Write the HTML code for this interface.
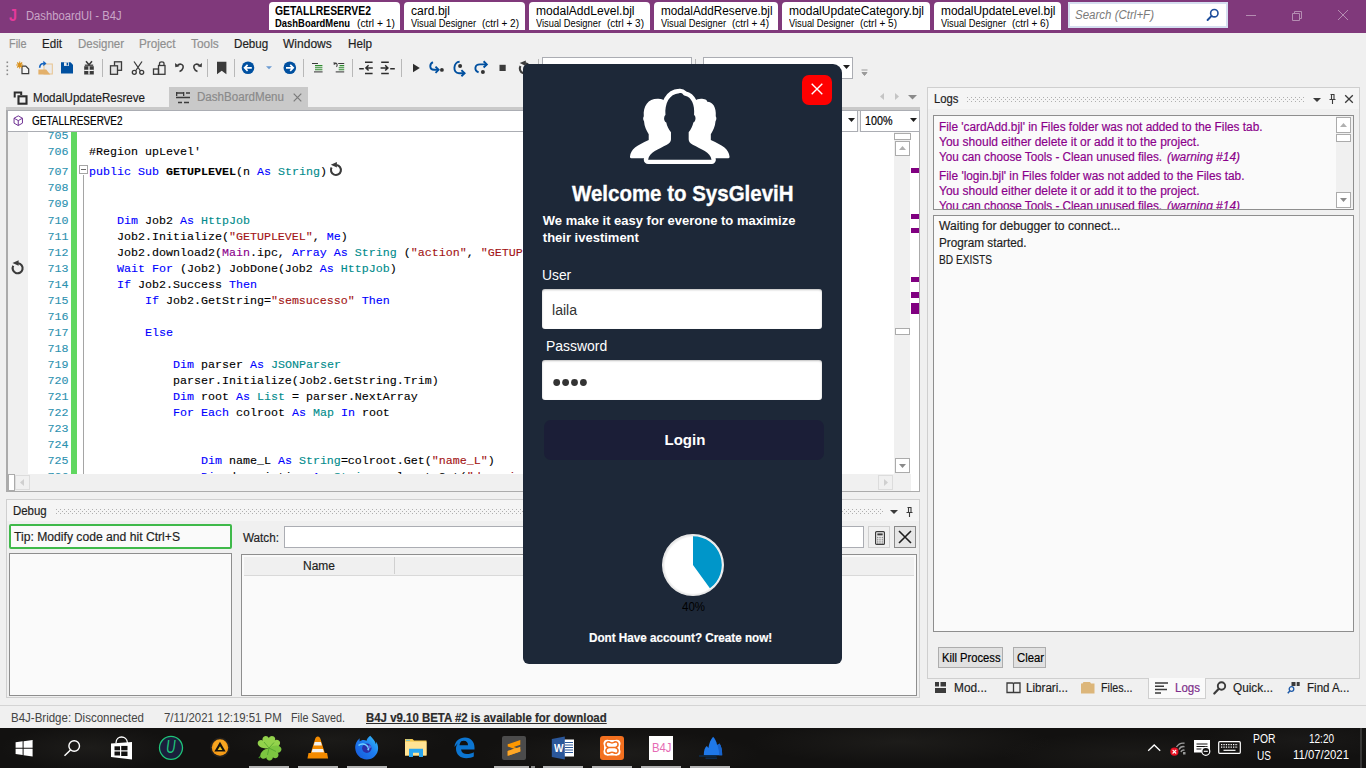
<!DOCTYPE html>
<html lang="en"><head>
<meta charset="utf-8">
<title>DashboardUI - B4J</title>
<style>
*{box-sizing:border-box;margin:0;padding:0}
html,body{width:1366px;height:768px;overflow:hidden;background:#f0f0f0}
body{position:relative;font-family:"Liberation Sans",sans-serif;font-size:12px;color:#1e1e1e}
.a{position:absolute;white-space:nowrap}
.t{position:absolute;white-space:nowrap;line-height:1;transform-origin:0 0}
/* title bar */
#titlebar{left:0;top:0;width:1366px;height:33px;background:#80397b}
.ttab{position:absolute;top:2px;height:28px;background:#fff;border-radius:4px 4px 0 0}
.ttab .l1{position:absolute;left:7px;top:3px;font-size:13px;line-height:13px;color:#000;white-space:nowrap}
.ttab .l2{position:absolute;left:7px;top:16px;font-size:11px;line-height:11px;color:#000;white-space:nowrap}
/* generic */
.box{position:absolute;background:#fff;border:1px solid #abadb3}
.sep{position:absolute;width:1px;background:#b4b4b4}
svg{position:absolute;overflow:visible}
/* code */
#code{left:77px;top:132px;width:818px;height:342px;background:#fff;overflow:hidden}
.cl{position:absolute;left:89px;white-space:pre;font-family:"Liberation Mono",monospace;font-size:11.67px;line-height:16px;height:16px;color:#000}
.ln{position:absolute;left:28px;width:40.5px;text-align:right;font-family:"Liberation Mono",monospace;font-size:11.67px;line-height:16px;height:16px;color:#2b91af}
.cl,.ln{-webkit-text-stroke:.12px currentColor}
.t{-webkit-text-stroke:.18px currentColor}
#modal .t,#titlebar .t,#taskbar .t{-webkit-text-stroke:0}
.k{color:#0000ff}.ty{color:#008b8b}.s{color:#a31515}.m{color:#8b008b}
</style>
</head>
<body>
<!-- TITLE BAR -->
<div id="titlebar" class="a">
<span class="t" style="color: rgb(230, 57, 155); font-weight: bold; font-size: 17px; left: 8.5px; top: 6.61px; transform: scaleX(0.8449);">J</span>
<span class="t" style="color: rgb(201, 166, 199); font-size: 12px; left: 26.4px; top: 9.64px; transform: scaleX(0.9358);">DashboardUI - B4J</span>
<div class="ttab" style="left:269px;width:131px"><span class="t" style="font-weight: bold; color: rgb(0, 0, 0); font-size: 12px; left: 6.4px; top: 2.64px; transform: scaleX(0.8655);">GETALLRESERVE2</span><span class="t" style="font-weight: bold; color: rgb(0, 0, 0); font-size: 10.5px; left: 6.4px; top: 16.31px; transform: scaleX(0.8989);">DashBoardMenu</span><span class="t" style="color: rgb(0, 0, 0); font-size: 10.5px; left: 88px; top: 16.31px; transform: scaleX(0.9795);">(ctrl + 1)</span></div>
<div class="ttab" style="left:404px;width:121px"><span class="t" style="color: rgb(0, 0, 0); font-size: 12px; left: 6.5px; top: 2.64px; transform: scaleX(1.0081);">card.bjl</span><span class="t" style="color: rgb(0, 0, 0); font-size: 10.5px; left: 6.5px; top: 16.31px; transform: scaleX(0.886);">Visual Designer</span><span class="t" style="color: rgb(0, 0, 0); font-size: 10.5px; left: 78px; top: 16.31px; transform: scaleX(0.9537);">(ctrl + 2)</span></div>
<div class="ttab" style="left:529px;width:121px"><span class="t" style="color: rgb(0, 0, 0); font-size: 12px; left: 6.5px; top: 2.64px; transform: scaleX(1.0045);">modalAddLevel.bjl</span><span class="t" style="color: rgb(0, 0, 0); font-size: 10.5px; left: 6.5px; top: 16.31px; transform: scaleX(0.886);">Visual Designer</span><span class="t" style="color: rgb(0, 0, 0); font-size: 10.5px; left: 78px; top: 16.31px; transform: scaleX(0.9537);">(ctrl + 3)</span></div>
<div class="ttab" style="left:654px;width:124px"><span class="t" style="color: rgb(0, 0, 0); font-size: 12px; left: 6.5px; top: 2.64px; transform: scaleX(0.9775);">modalAddReserve.bjl</span><span class="t" style="color: rgb(0, 0, 0); font-size: 10.5px; left: 6.5px; top: 16.31px; transform: scaleX(0.886);">Visual Designer</span><span class="t" style="color: rgb(0, 0, 0); font-size: 10.5px; left: 78px; top: 16.31px; transform: scaleX(0.9537);">(ctrl + 4)</span></div>
<div class="ttab" style="left:782px;width:148px"><span class="t" style="color: rgb(0, 0, 0); font-size: 12px; left: 6.5px; top: 2.64px; transform: scaleX(1.0035);">modalUpdateCategory.bjl</span><span class="t" style="color: rgb(0, 0, 0); font-size: 10.5px; left: 6.5px; top: 16.31px; transform: scaleX(0.886);">Visual Designer</span><span class="t" style="color: rgb(0, 0, 0); font-size: 10.5px; left: 78px; top: 16.31px; transform: scaleX(0.9537);">(ctrl + 5)</span></div>
<div class="ttab" style="left:934px;width:127px"><span class="t" style="color: rgb(0, 0, 0); font-size: 12px; left: 6.5px; top: 2.64px; transform: scaleX(0.9921);">modalUpdateLevel.bjl</span><span class="t" style="color: rgb(0, 0, 0); font-size: 10.5px; left: 6.5px; top: 16.31px; transform: scaleX(0.886);">Visual Designer</span><span class="t" style="color: rgb(0, 0, 0); font-size: 10.5px; left: 78px; top: 16.31px; transform: scaleX(0.9537);">(ctrl + 6)</span></div>
<div class="a" style="left:1068px;top:2px;width:160px;height:26px;background:#fff;border:2px solid #d5def0"></div>
<span class="t" style="font-style: italic; color: rgb(122, 122, 122); font-size: 12px; left: 1075px; top: 9.34px; transform: scaleX(0.9592);">Search (Ctrl+F)</span>
<svg style="left:1206px;top:8px" width="14" height="14" viewBox="0 0 14 14"><circle cx="8.3" cy="5.2" r="3.7" fill="none" stroke="#1e4e9c" stroke-width="1.6"></circle><path d="M5.6 7.9 L1.6 12" stroke="#1e4e9c" stroke-width="2" stroke-linecap="round"></path></svg>
<svg style="left:1245px;top:8px" width="110" height="16" viewBox="0 0 110 16"><path d="M1 7.5h10" stroke="#b58db2" stroke-width="1"></path><path d="M47.5 5.5h7v7h-7z M49.5 5.5v-2h7v7h-2" fill="none" stroke="#b58db2" stroke-width="1"></path><path d="M93 2l10 10M103 2l-10 10" stroke="#b58db2" stroke-width="1"></path></svg>
</div>
<!-- MENU -->
<div id="menubar">
<span class="t" style="color: rgb(143, 143, 143); font-size: 12px; left: 9.3px; top: 37.64px; transform: scaleX(0.9047);">File</span>
<span class="t" style="font-size: 12px; left: 42.2px; top: 37.64px; transform: scaleX(0.9668);">Edit</span>
<span class="t" style="color: rgb(143, 143, 143); font-size: 12px; left: 77.5px; top: 37.64px; transform: scaleX(0.9577);">Designer</span>
<span class="t" style="color: rgb(143, 143, 143); font-size: 12px; left: 138.5px; top: 37.64px; transform: scaleX(0.977);">Project</span>
<span class="t" style="color: rgb(143, 143, 143); font-size: 12px; left: 190.5px; top: 37.64px; transform: scaleX(0.9887);">Tools</span>
<span class="t" style="font-size: 12px; left: 233.6px; top: 37.64px; transform: scaleX(0.9668);">Debug</span>
<span class="t" style="font-size: 12px; left: 283.4px; top: 37.64px; transform: scaleX(1.0023);">Windows</span>
<span class="t" style="font-size: 12px; left: 347.5px; top: 37.64px; transform: scaleX(0.9762);">Help</span>
</div>
<!-- TOOLBAR -->
<div id="toolbar">
<svg style="left:0;top:55px" width="880" height="28" viewBox="0 55 880 28">
<!-- grip -->
<g fill="#8a8a8a"><rect x="6.5" y="61.5" width="1.6" height="1.6"></rect><rect x="6.5" y="65.5" width="1.6" height="1.6"></rect><rect x="6.5" y="69.5" width="1.6" height="1.6"></rect><rect x="6.5" y="73.5" width="1.6" height="1.6"></rect></g>
<!-- new -->
<path d="M22 66.200h3.800l2.900 2.900v4.600h-6.700z" fill="#f4f4f4" stroke="#3b3b3b" stroke-width="1.200"></path><g stroke="#d8901c" stroke-width="1.100"><path d="M19.700 61.500v7M16.200 65h7M17.200 62.500l5 5M22.200 62.500l-5 5"></path></g>
<!-- open -->
<rect x="44" y="64" width="8.300" height="10" fill="#ebebeb" stroke="#e8c48f" stroke-width="1"></rect><path d="M38.400 74.500v-5h7.800l4 5z" fill="#e3b06a"></path><path d="M39.700 67.800c0-3.200 1.800-4.300 4.300-4.300" fill="none" stroke="#1565c0" stroke-width="1.700"></path><path d="M43.300 60.800l3.200 2.700-3.200 2.700z" fill="#1565c0"></path>
<!-- save -->
<path d="M61 62.3h9.5l2.5 2.5v8.8h-12z" fill="#0050a0"></path><rect x="64" y="62.3" width="5" height="3.6" fill="#f0f0f0"></rect><rect x="66.6" y="62.8" width="1.6" height="2.6" fill="#0050a0"></rect>
<!-- zip/gift -->
<rect x="84.200" y="66.200" width="9.600" height="8.300" fill="#3b3b3b"></rect><path d="M89 66.200v8.300M84.200 70.300h9.600" stroke="#f0f0f0" stroke-width="1.300"></path><path d="M86 61.300l3 3.400 3-3.400" fill="none" stroke="#3b3b3b" stroke-width="1.600"></path><path d="M84.800 65.200h8.400" stroke="#3b3b3b" stroke-width="1.300"></path>
<rect x="102" y="59" width="1" height="18" fill="#b8b8b8"></rect>
<!-- copy -->
<g fill="#e4e4e4" stroke="#3b3b3b" stroke-width="1.3"><rect x="114.5" y="61.8" width="7" height="8.5"></rect><rect x="110.5" y="65.8" width="7" height="8.5"></rect></g>
<!-- cut -->
<g fill="none" stroke="#3b3b3b" stroke-width="1.3"><path d="M134 61.5l6.5 9.5M142 61.5l-6.5 9.5"></path><circle cx="134.3" cy="72.3" r="2"></circle><circle cx="141.7" cy="72.3" r="2"></circle></g>
<!-- paste -->
<g fill="none" stroke="#3b3b3b" stroke-width="1.3"><rect x="158.5" y="65.5" width="6.5" height="8.8"></rect><rect x="153.5" y="69" width="5" height="5.3"></rect><path d="M159.5 65.5v-2c0-2.3 4.5-2.3 4.5 0v2"></path></g>
<!-- undo -->
<path d="M177 66c3-3.5 7-1.5 6 2-.5 1.800-2 3-3.500 3.500" fill="none" stroke="#3b3b3b" stroke-width="1.5"></path><path d="M175 63l.3 4.300 4-1z" fill="#3b3b3b"></path>
<!-- redo -->
<path d="M200 66c-3-3.500-7-1.500-6 2 .5 1.800 2 3 3.500 3.500" fill="none" stroke="#3b3b3b" stroke-width="1.5"></path><path d="M202 63l-.3 4.300-4-1z" fill="#3b3b3b"></path>
<rect x="207" y="59" width="1" height="18" fill="#b8b8b8"></rect>
<!-- bookmark -->
<path d="M217 61.700h9.400v12.600l-4.700-3.600-4.700 3.600z" fill="#3b3b3b"></path>
<rect x="234" y="59" width="1" height="18" fill="#b8b8b8"></rect>
<!-- back/forward -->
<circle cx="248" cy="67.800" r="6.300" fill="#0050a0"></circle><path d="M251.800 67.800h-7M247.600 64.800l-3 3 3 3" fill="none" stroke="#fff" stroke-width="1.700"></path>
<path d="M266 66.300h6l-3 3z" fill="#6c9bd2"></path>
<circle cx="289.800" cy="67.800" r="6.300" fill="#0050a0"></circle><path d="M286 67.800h7M290.200 64.800l3 3-3 3" fill="none" stroke="#fff" stroke-width="1.700"></path>
<rect x="303" y="59" width="1" height="18" fill="#b8b8b8"></rect>
<!-- comment/uncomment -->
<g stroke-width="1.050"><path d="M312 63.500h6" stroke="#3b3b3b"></path><path d="M315 65.600h7.400M315 67.700h7.400M315 69.800h7.400" stroke="#2e8b2e"></path><path d="M314 71.900h8.600" stroke="#3b3b3b"></path></g><g stroke-width="1.050"><path d="M338.200 63.500h6" stroke="#3b3b3b"></path><path d="M339.500 65.600h4.700M338.700 67.700h5.500M338.700 69.800h5.500" stroke="#2e8b2e"></path><path d="M335.700 71.900h8.500" stroke="#3b3b3b"></path><path d="M334.300 63.300c2.600-.6 3.700 1.300 2.200 3.600" stroke="#3b3b3b" fill="none" stroke-width="1.100"></path><path d="M333.500 62l.3 2.900 2.500-1.200z" fill="#3b3b3b" stroke="none"></path></g>
<rect x="352" y="59" width="1" height="18" fill="#b8b8b8"></rect>
<!-- outdent / indent -->
<g stroke="#2d2d2d" stroke-width="1.500" fill="none"><path d="M365 62.200h7.600M365 73.500h7.600M359.200 68.800h4.600M365.800 67.900h7M368.600 65.300l-2.700 2.600 2.700 2.600"></path></g><g stroke="#2d2d2d" stroke-width="1.500" fill="none"><path d="M381.200 62.200h7.600M381.200 73.500h7.600M390.200 68.800h4.600M380.600 67.900h7M385.200 65.300l2.700 2.600-2.700 2.600"></path></g>
<rect x="401" y="59" width="1" height="18" fill="#b8b8b8"></rect>
<!-- run -->
<path d="M413 63.800l6.800 4.200-6.800 4.200z" fill="#2d2d2d"></path>
<!-- step in -->
<g fill="none" stroke="#0050a0" stroke-width="1.900"><path d="M432.900 62.200C429.200 64.300 429.300 69.800 434 69.800H438"></path><path d="M435.500 66.700l3.100 3.100-3.100 3.100"></path></g><circle cx="441.900" cy="69.900" r="1.900" fill="#333"></circle>
<!-- step over -->
<g fill="none" stroke="#0050a0" stroke-width="1.900"><path d="M459.600 61.800C453.300 62 452.300 73.200 459 73.200H464"></path><path d="M461.400 70.100l3.200 3.100-3.200 3.100"></path></g><circle cx="460.100" cy="66.100" r="2" fill="#333"></circle>
<!-- step out -->
<g fill="none" stroke="#0050a0" stroke-width="1.900"><path d="M478.600 72.400C473.800 70.200 474.500 64.400 480 64.400H486"></path><path d="M483.600 61.300l3.200 3.100-3.200 3.100"></path></g><circle cx="482.900" cy="71.900" r="2" fill="#333"></circle>
<!-- stop -->
<rect x="499.500" y="64.800" width="6.200" height="6.200" fill="#3b3b3b"></rect>
<!-- restart -->
<g transform="translate(524.8 68.4)"><path d="M-4.330-2.500A5 5 0 1 0 .5-5" fill="none" stroke="#3b3b3b" stroke-width="2.100"></path><path d="M-5.100-5.300L1-8v5.500z" fill="#3b3b3b"></path></g>
<rect x="538" y="59" width="1" height="18" fill="#b8b8b8"></rect>
<rect x="695" y="59" width="1" height="18" fill="#b8b8b8"></rect>
<!-- overflow -->
<path d="M861.500 70h6M862 72.500h5l-2.500 3z" stroke="#9a9a9a" fill="#9a9a9a" stroke-width="1"></path>
</svg>
<div class="box" style="left:542px;top:57px;width:150px;height:22px"></div>
<div class="box" style="left:703px;top:57px;width:150px;height:22px"></div>
<svg style="left:843px;top:65px" width="8" height="5" viewBox="0 0 8 5"><path d="M0 0h7l-3.500 4z" fill="#1e1e1e"></path></svg>
</div>
<!-- DOC TABS -->
<div id="doctabs">
<div class="a" style="left:169px;top:87px;width:139px;height:21px;background:#c9c9c9"></div>
<div class="a" style="left:6px;top:107px;width:914px;height:4px;background:#c9c9c9"></div>
<svg style="left:13px;top:91px" width="16" height="14" viewBox="0 0 16 14"><path d="M1.700 6.500v-5h6.500v2.500" fill="none" stroke="#2d2d2d" stroke-width="2"></path><rect x="5.500" y="5.300" width="8" height="7.400" fill="none" stroke="#2d2d2d" stroke-width="2.100"></rect></svg>
<span class="t" style="font-size: 12px; left: 33px; top: 91.54px; transform: scaleX(0.965);">ModalUpdateResreve</span>
<svg style="left:175px;top:91px" width="16" height="14" viewBox="0 0 16 14"><g stroke="#3b3b3b" stroke-width="1.500" fill="none"><path d="M1 2h8M11 2h4M1 6.500h14M3 11.500h4M9 11.500h5"></path></g><g fill="#3b3b3b"><rect x="1" y="1" width="1.300" height="4"></rect><rect x="8" y="1" width="1.300" height="4"></rect></g></svg>
<span class="t" style="color: rgb(138, 138, 138); font-size: 12px; left: 196.6px; top: 91.14px; transform: scaleX(0.966);">DashBoardMenu</span>
<svg style="left:293px;top:93px" width="9" height="9" viewBox="0 0 9 9"><path d="M.7.700l7.600 7.600M8.300.700L.7 8.300" stroke="#7a7a7a" stroke-width="1.200"></path></svg>
<svg style="left:878px;top:92px" width="42" height="10" viewBox="0 0 42 10"><path d="M6 1v7l-4-3.500z" fill="#c4c4c4"></path><path d="M17 1v7l4-3.500z" fill="#c4c4c4"></path><path d="M30 3h9l-4.500 4.500z" fill="#8a8a8a"></path></svg>
</div>
<!-- EDITOR -->
<div id="editor">
<div class="a" style="left:6px;top:110px;width:914px;height:382px;background:#ababab"></div>
<div class="box" style="left:7px;top:110px;width:851px;height:22px"></div>
<div class="a" style="left:858px;top:111px;width:2px;height:21px;background:#f0f0f0"></div>
<div class="box" style="left:860px;top:110px;width:60px;height:22px"></div>
<svg style="left:13.300px;top:115px" width="10.500" height="11.400" viewBox="0 0 12 13"><g fill="none" stroke="#6a2c91" stroke-width="1.100"><path d="M6 1l4.800 2.700v5.600L6 12 1.200 9.300V3.700z"></path><path d="M1.200 3.700L6 6.400l4.800-2.700M6 6.400V12"></path></g></svg>
<span class="t" style="color: rgb(0, 0, 0); font-size: 12px; left: 32.2px; top: 115.34px; transform: scaleX(0.8308);">GETALLRESERVE2</span>
<svg style="left:848px;top:118px" width="8" height="5" viewBox="0 0 8 5"><path d="M0 0h7l-3.500 4z" fill="#1e1e1e"></path></svg>
<span class="t" style="color: rgb(0, 0, 0); font-size: 12px; left: 865px; top: 115.34px; transform: scaleX(0.8957);">100%</span>
<svg style="left:910px;top:118px" width="8" height="5" viewBox="0 0 8 5"><path d="M0 0h7l-3.500 4z" fill="#1e1e1e"></path></svg>
<div id="codearea" class="a" style="left:8px;top:132px;width:911px;height:342px;background:#fff;overflow:hidden">
<div class="a" style="left:0;top:0;width:20px;height:342px;background:#f0f0f0"></div>
<div class="a" style="left:63px;top:0;width:6px;height:342px;background:#60d760"></div>
<div class="a" style="left:75px;top:43px;width:1px;height:299px;background:#a5a5a5"></div>
<div class="a" style="left:71px;top:33px;width:9px;height:9px;background:#fff;border:1px solid #a5a5a5"></div>
<div class="a" style="left:73px;top:37px;width:5px;height:1px;background:#6a6a6a"></div>
<div id="codelines" class="a" style="left:-8px;top:0;width:902px;height:342px">
<span class="ln" style="top:-3.7px">705</span>
<span class="ln" style="top:12.3px">706</span>
<span class="cl" style="top:12.3px">#Region upLevel'</span>
<span class="ln" style="top:31.6px">707</span>
<span class="cl" style="top:31.6px"><span class="k">public</span> <span class="k">Sub</span> <b>GETUPLEVEL</b>(n <span class="k">As</span> <span class="ty">String</span>)</span>
<span class="ln" style="top:48.4px">708</span>
<span class="ln" style="top:64.4px">709</span>
<span class="ln" style="top:80.5px">710</span>
<span class="cl" style="top:80.5px">    <span class="k">Dim</span> Job2 <span class="k">As</span> <span class="ty">HttpJob</span></span>
<span class="ln" style="top:96.5px">711</span>
<span class="cl" style="top:96.5px">    Job2.Initialize(<span class="s">"GETUPLEVEL"</span>, <span class="k">Me</span>)</span>
<span class="ln" style="top:112.5px">712</span>
<span class="cl" style="top:112.5px">    Job2.download2(<span class="m">Main</span>.ipc, <span class="k">Array</span> <span class="k">As</span> <span class="ty">String</span> (<span class="s">"action"</span>, <span class="s">"GETUPLEVEL"</span>, <span class="s">"n"</span>, n))</span>
<span class="ln" style="top:128.5px">713</span>
<span class="cl" style="top:128.5px">    <span class="k">Wait For</span> (Job2) JobDone(Job2 <span class="k">As</span> <span class="ty">HttpJob</span>)</span>
<span class="ln" style="top:144.6px">714</span>
<span class="cl" style="top:144.6px">    <span class="k">If</span> Job2.Success <span class="k">Then</span></span>
<span class="ln" style="top:160.6px">715</span>
<span class="cl" style="top:160.6px">        <span class="k">If</span> Job2.GetString=<span class="s">"semsucesso"</span> <span class="k">Then</span></span>
<span class="ln" style="top:176.6px">716</span>
<span class="ln" style="top:192.7px">717</span>
<span class="cl" style="top:192.7px">        <span class="k">Else</span></span>
<span class="ln" style="top:208.7px">718</span>
<span class="ln" style="top:224.7px">719</span>
<span class="cl" style="top:224.7px">            <span class="k">Dim</span> parser <span class="k">As</span> <span class="ty">JSONParser</span></span>
<span class="ln" style="top:240.8px">720</span>
<span class="cl" style="top:240.8px">            parser.Initialize(Job2.GetString.Trim)</span>
<span class="ln" style="top:256.8px">721</span>
<span class="cl" style="top:256.8px">            <span class="k">Dim</span> root <span class="k">As</span> <span class="ty">List</span> = parser.NextArray</span>
<span class="ln" style="top:272.8px">722</span>
<span class="cl" style="top:272.8px">            <span class="k">For Each</span> colroot <span class="k">As</span> <span class="ty">Map</span> <span class="k">In</span> root</span>
<span class="ln" style="top:288.9px">723</span>
<span class="ln" style="top:304.9px">724</span>
<span class="ln" style="top:320.9px">725</span>
<span class="cl" style="top:320.9px">                <span class="k">Dim</span> name_L <span class="k">As</span> <span class="ty">String</span>=colroot.Get(<span class="s">"name_L"</span>)</span>
<span class="ln" style="top:336.9px">726</span>
<span class="cl" style="top:336.9px">                <span class="k">Dim</span> description <span class="k">As</span> <span class="ty">String</span>=colroot.Get(<span class="s">"description"</span>)</span>
</div>
<!-- v scrollbar -->
<div class="a" style="left:886px;top:0;width:16px;height:342px;background:#f0f0f0"></div>
<div class="a" style="left:886px;top:1px;width:17px;height:7px;background:#fff;border:1px solid #ababab"></div>
<div class="a" style="left:887px;top:9px;width:15px;height:15px;background:#fff;border:1px solid #ababab"></div>
<svg style="left:891px;top:14px" width="7" height="4" viewBox="0 0 7 4"><path d="M0 4h7l-3.500-4z" fill="#b0b0b0"></path></svg>
<div class="a" style="left:887px;top:196px;width:15px;height:7px;background:#fff;border:1px solid #ababab"></div>
<div class="a" style="left:887px;top:326px;width:15px;height:15px;background:#fff;border:1px solid #ababab"></div>
<svg style="left:891px;top:332px" width="7" height="4" viewBox="0 0 7 4"><path d="M0 0h7l-3.500 4z" fill="#8a8a8a"></path></svg>
<!-- markers -->
<div class="a" style="left:903px;top:36px;width:8px;height:5px;background:#800080"></div>
<div class="a" style="left:903px;top:82px;width:8px;height:5px;background:#800080"></div>
<div class="a" style="left:903px;top:96px;width:8px;height:5px;background:#800080"></div>
<div class="a" style="left:903px;top:145px;width:8px;height:5px;background:#800080"></div>
<div class="a" style="left:903px;top:160px;width:8px;height:6px;background:#800080"></div>
<div class="a" style="left:903px;top:171px;width:8px;height:11px;background:#800080"></div>
</div>
<!-- h scrollbar -->
<div class="a" style="left:8px;top:474px;width:911px;height:17px;background:#f0f0f0"></div>
<div class="a" style="left:911px;top:474px;width:8px;height:17px;background:#fff"></div>
<div class="a" style="left:8px;top:474px;width:7px;height:17px;background:#fff;border:1px solid #ababab"></div>
<div class="a" style="left:15px;top:475px;width:15px;height:15px;border:1px solid #dcdcdc"></div>
<svg style="left:20px;top:479px" width="4" height="7" viewBox="0 0 4 7"><path d="M4 0v7L0 3.500z" fill="#cfcfcf"></path></svg>
<div class="a" style="left:878px;top:475px;width:15px;height:15px;border:1px solid #dcdcdc"></div>
<svg style="left:884px;top:479px" width="4" height="7" viewBox="0 0 4 7"><path d="M0 0v7l4-3.500z" fill="#cfcfcf"></path></svg>
<!-- reload icons -->
<svg style="left:0;top:0" width="400" height="300" viewBox="0 0 400 300"><g transform="translate(335.9 170)"><path d="M-4.330-2.500A5 5 0 1 0 .5-5" fill="none" stroke="#3b3b3b" stroke-width="2.100"></path><path d="M-5.100-5.300L1-8v5.500z" fill="#3b3b3b"></path></g><g transform="translate(17.6 268.3)"><path d="M-4.330-2.500A5 5 0 1 0 .5-5" fill="none" stroke="#3b3b3b" stroke-width="2.100"></path><path d="M-5.100-5.300L1-8v5.500z" fill="#3b3b3b"></path></g></svg>
</div>
<!-- DEBUG PANEL -->
<svg width="0" height="0" style="position:absolute"><defs><pattern id="dp" width="4" height="4" patternUnits="userSpaceOnUse"><rect x="0" y="0" width="1" height="1" fill="#b0b0b0"></rect><rect x="2" y="2" width="1" height="1" fill="#b0b0b0"></rect></pattern></defs></svg><div id="debug">
<div class="a" style="left:6px;top:499px;width:914px;height:199px;background:#f5f5f5;border:1px solid #cfcfcf"></div>
<div class="a" style="left:7px;top:521px;width:912px;height:176px;background:#f0f0f0"></div>
<span class="t" style="font-size: 12px; left: 12.7px; top: 504.84px; transform: scaleX(0.9527);">Debug</span>
<svg style="left:56px;top:509px" width="828" height="5"><rect width="828" height="5" fill="url(#dp)"></rect></svg>
<svg style="left:889px;top:506px" width="26" height="12" viewBox="0 0 26 12"><path d="M1 4h8l-4 4z" fill="#3b3b3b"></path><path d="M18.500 1.500h4M19.500 1.500v5M22 1.500v5M17.500 6.500h6M20.500 6.500v4.500" stroke="#3b3b3b" stroke-width="1.100" fill="none"></path></svg>
<div class="a" style="left:9px;top:524px;width:223px;height:25px;background:#fafafa;border:2px solid #3fb94a;border-radius:2px"></div>
<span class="t" style="color: rgb(30, 30, 30); font-size: 12px; left: 14.4px; top: 531.14px; transform: scaleX(1.0124);">Tip: Modify code and hit Ctrl+S</span>
<div class="a" style="left:9px;top:553px;width:223px;height:143px;background:#fafafa;border:1px solid #8e8e8e"></div>
<span class="t" style="font-size: 12px; left: 243.3px; top: 531.64px; transform: scaleX(0.9754);">Watch:</span>
<div class="box" style="left:284px;top:526px;width:580px;height:22px"></div>
<div class="a" style="left:868px;top:526px;width:22px;height:22px;background:#f0f0f0;border:1px solid #d0d0d0"></div>
<svg style="left:874.500px;top:530.500px" width="10" height="14" viewBox="0 0 10 14"><rect x=".6" y=".6" width="8.800" height="12.800" rx="1" fill="#f6f6f6" stroke="#3b3b3b" stroke-width="1.200"></rect><rect x="2.300" y="2.400" width="5.400" height="2" fill="#3b3b3b"></rect><g fill="#3b3b3b"><rect x="2.3" y="5.8" width="1" height="1"></rect><rect x="4.5" y="5.8" width="1" height="1"></rect><rect x="6.7" y="5.8" width="1" height="1"></rect><rect x="2.3" y="7.7" width="1" height="1"></rect><rect x="4.5" y="7.7" width="1" height="1"></rect><rect x="6.7" y="7.7" width="1" height="1"></rect><rect x="2.3" y="9.6" width="1" height="1"></rect><rect x="4.5" y="9.6" width="1" height="1"></rect><rect x="6.7" y="9.6" width="1" height="1"></rect><rect x="2.3" y="11.5" width="1" height="1"></rect><rect x="4.5" y="11.5" width="1" height="1"></rect><rect x="6.7" y="11.5" width="1" height="1"></rect></g></svg>
<div class="a" style="left:894px;top:526px;width:22px;height:22px;background:#e6e6e6;border:1px solid #8a8a8a"></div>
<svg style="left:898px;top:530px" width="14" height="14" viewBox="0 0 14 14"><path d="M1 1l12 12M13 1L1 13" stroke="#1e1e1e" stroke-width="1.600"></path></svg>
<div class="a" style="left:241px;top:554px;width:676px;height:142px;background:#fafafa;border:1px solid #8e8e8e"></div>
<div class="a" style="left:244px;top:557px;width:670px;height:19px;background:#f0f0f0;border-bottom:1px solid #d9d9d9"></div>
<div class="a" style="left:394px;top:557px;width:1px;height:17px;background:#d0d0d0"></div>
<span class="t" style="font-size: 12px; left: 303px; top: 560.24px; transform: scaleX(0.9995);">Name</span>
</div>
<!-- LOGS PANEL -->
<div id="logs">
<div class="a" style="left:927px;top:87px;width:433px;height:592px;background:#f5f5f5;border:1px solid #cfcfcf;border-bottom:none"></div>
<div class="a" style="left:928px;top:109px;width:431px;height:569px;background:#f0f0f0"></div>
<span class="t" style="font-size: 12px; left: 933.6px; top: 92.64px; transform: scaleX(0.9412);">Logs</span>
<svg style="left:967px;top:97px" width="338" height="5"><rect width="338" height="5" fill="url(#dp)"></rect></svg>
<svg style="left:1312px;top:93px" width="44" height="12" viewBox="0 0 44 12"><path d="M1 5h8l-4 4z" fill="#3b3b3b"></path><path d="M18.500 1.500h4M19.500 1.500v5M22 1.500v5M17.500 6.500h6M20.500 6.500v4.500" stroke="#3b3b3b" stroke-width="1.100" fill="none"></path><path d="M33.200 2.200l7.600 7.600M40.800 2.200l-7.600 7.600" stroke="#3b3b3b" stroke-width="1.300"></path></svg>
<div class="a" style="left:933px;top:115px;width:421px;height:95px;background:#fafafa;border:1px solid #8e8e8e;overflow:hidden"></div>
<div class="a" style="left:934px;top:116px;width:402px;height:93px;overflow:hidden">
<span class="t" style="color: rgb(139, 0, 139); font-size: 12px; left: 5.3px; top: 5.04px; transform: scaleX(0.984);">File 'cardAdd.bjl' in Files folder was not added to the Files tab.</span>
<span class="t" style="color: rgb(139, 0, 139); font-size: 12px; left: 5.3px; top: 19.84px; transform: scaleX(1.0004);">You should either delete it or add it to the project.</span>
<span class="t" style="color: rgb(139, 0, 139); font-size: 12px; left: 5.3px; top: 34.64px; transform: scaleX(0.9745);">You can choose Tools - Clean unused files.</span>
<span class="t" style="color: rgb(139, 0, 139); font-style: italic; font-size: 12px; left: 232.5px; top: 34.64px; transform: scaleX(0.9949);">(warning #14)</span>
<span class="t" style="color: rgb(139, 0, 139); font-size: 12px; left: 5.3px; top: 53.84px; transform: scaleX(0.9873);">File 'login.bjl' in Files folder was not added to the Files tab.</span>
<span class="t" style="color: rgb(139, 0, 139); font-size: 12px; left: 5.3px; top: 68.64px; transform: scaleX(1.0004);">You should either delete it or add it to the project.</span>
<span class="t" style="color: rgb(139, 0, 139); font-size: 12px; left: 5.3px; top: 84.24px; transform: scaleX(0.9745);">You can choose Tools - Clean unused files.</span>
<span class="t" style="color: rgb(139, 0, 139); font-style: italic; font-size: 12px; left: 232.5px; top: 84.24px; transform: scaleX(0.9949);">(warning #14)</span>
</div>
<div class="a" style="left:1336px;top:116px;width:17px;height:92px;background:#f0f0f0"></div>
<div class="a" style="left:1336px;top:117px;width:15px;height:16px;background:#fff;border:1px solid #ababab"></div>
<svg style="left:1340px;top:123px" width="7" height="4" viewBox="0 0 7 4"><path d="M0 4h7l-3.500-4z" fill="#b0b0b0"></path></svg>
<div class="a" style="left:1336px;top:134px;width:15px;height:8px;background:#fff;border:1px solid #ababab"></div>
<div class="a" style="left:1336px;top:192px;width:15px;height:16px;background:#fff;border:1px solid #ababab"></div>
<svg style="left:1340px;top:198px" width="7" height="4" viewBox="0 0 7 4"><path d="M0 0h7l-3.500 4z" fill="#8a8a8a"></path></svg>
<div class="a" style="left:933px;top:215px;width:421px;height:417px;background:#fafafa;border:1px solid #8e8e8e"></div>
<span class="t" style="font-size: 12px; left: 938.6px; top: 220.14px; transform: scaleX(1.0102);">Waiting for debugger to connect...</span>
<span class="t" style="font-size: 12px; left: 938.6px; top: 237.04px; transform: scaleX(0.979);">Program started.</span>
<span class="t" style="font-size: 12px; left: 938.6px; top: 253.94px; transform: scaleX(0.8455);">BD EXISTS</span>
<div class="a" style="left:938px;top:647px;width:65px;height:21px;background:#e1e1e1;border:1px solid #adadad"></div>
<span class="t" style="color: rgb(0, 0, 0); font-size: 12px; left: 941.5px; top: 651.84px; transform: scaleX(0.9332);">Kill Process</span>
<div class="a" style="left:1013px;top:647px;width:33px;height:21px;background:#e1e1e1;border:1px solid #adadad"></div>
<span class="t" style="color: rgb(0, 0, 0); font-size: 12px; left: 1016.5px; top: 651.84px; transform: scaleX(0.9412);">Clear</span>
<!-- bottom tabs -->
<div class="a" style="left:927px;top:678px;width:433px;height:1px;background:#cfcfcf"></div>
<div class="a" style="left:1148px;top:678px;width:58px;height:21px;background:#fafafa;border:1px solid #cfcfcf;border-top:none"></div>
<svg style="left:935px;top:682px" width="12" height="12" viewBox="0 0 12 12"><g fill="#3b3b3b"><rect x="0" y="0" width="4" height="4.500"></rect><rect x="5.500" y="0" width="5.500" height="4.500"></rect><rect x="0" y="6" width="11" height="5"></rect></g></svg>
<span class="t" style="font-size: 12px; left: 954.4px; top: 682.14px; transform: scaleX(0.9892);">Mod...</span>
<svg style="left:1006px;top:682px" width="15" height="12" viewBox="0 0 15 12"><path d="M7.500 1.500v9M1 1h5.500q1 0 1 1 0-1 1-1H14v9.500H8.500q-1 0-1 .8 0-.8-1-.8H1z" fill="none" stroke="#3b3b3b" stroke-width="1.300"></path></svg>
<span class="t" style="font-size: 12px; left: 1026px; top: 682.14px; transform: scaleX(0.9686);">Librari...</span>
<svg style="left:1081px;top:681px" width="14" height="13" viewBox="0 0 14 13"><path d="M0 12.500V2.500h1.500l1-1.500H9l1 1.500h3.500v10z" fill="#dcb67a"></path></svg>
<span class="t" style="font-size: 12px; left: 1101px; top: 682.14px; transform: scaleX(0.8912);">Files...</span>
<svg style="left:1155px;top:682px" width="14" height="12" viewBox="0 0 14 12"><g stroke="#3b3b3b" stroke-width="1.500"><path d="M0 1h13M0 4.300h9M0 7.600h12M0 10.900h6"></path></g></svg>
<span class="t" style="color: rgb(125, 47, 138); font-size: 12px; left: 1175px; top: 682.14px; transform: scaleX(0.9604);">Logs</span>
<svg style="left:1213px;top:681px" width="14" height="14" viewBox="0 0 14 14"><circle cx="8.500" cy="5" r="3.700" fill="none" stroke="#3b3b3b" stroke-width="1.900"></circle><path d="M5.800 7.800L1.300 12.500" stroke="#3b3b3b" stroke-width="2.200" stroke-linecap="round"></path></svg>
<span class="t" style="font-size: 12px; left: 1232.8px; top: 682.14px; transform: scaleX(0.9831);">Quick...</span>
<svg style="left:1287px;top:682px" width="13" height="12" viewBox="0 0 13 12"><rect x="4.500" y="0" width="4" height="4" fill="#3b3b3b"></rect><rect x="9.700" y="0" width="3" height="4" fill="#3b3b3b"></rect><circle cx="4.500" cy="7" r="2.300" fill="none" stroke="#1e5aa8" stroke-width="1.300"></circle><path d="M3 8.800L.8 11.200" stroke="#1e5aa8" stroke-width="1.500"></path></svg>
<span class="t" style="font-size: 12px; left: 1307px; top: 682.14px; transform: scaleX(0.9652);">Find A...</span>
</div>
<!-- STATUS BAR -->
<div id="status">
<div class="a" style="left:0;top:705px;width:1366px;height:1px;background:#d4d4d4"></div>
<span class="t" style="color: rgb(68, 68, 68); -webkit-text-stroke: 0px; font-size: 12px; left: 10.5px; top: 711.64px; transform: scaleX(0.9586);">B4J-Bridge: Disconnected</span>
<span class="t" style="color: rgb(68, 68, 68); -webkit-text-stroke: 0px; font-size: 12px; left: 164px; top: 711.64px; transform: scaleX(0.9502);">7/11/2021 12:19:51 PM</span>
<span class="t" style="color: rgb(68, 68, 68); -webkit-text-stroke: 0px; font-size: 12px; left: 291.4px; top: 711.64px; transform: scaleX(0.8995);">File Saved.</span>
<span class="t" style="font-weight: bold; text-decoration: underline; color: rgb(43, 43, 43); font-size: 12px; left: 366.3px; top: 711.64px; transform: scaleX(0.9523);">B4J v9.10 BETA #2 is available for download</span>
</div>
<!-- TASKBAR -->
<div id="taskbar">
<div class="a" style="left:0;top:728px;width:1366px;height:40px;background:radial-gradient(ellipse 90px 22px at 90px 20px,#1d1c1a,transparent),radial-gradient(ellipse 120px 20px at 330px 12px,#1b1a18,transparent),radial-gradient(ellipse 140px 24px at 620px 26px,#1c1b19,transparent),radial-gradient(ellipse 150px 22px at 900px 14px,#1d1c1a,transparent),radial-gradient(ellipse 130px 22px at 1130px 26px,#1b1a18,transparent),radial-gradient(ellipse 100px 20px at 1300px 12px,#1a1918,transparent),#121110"></div>
<svg style="left:0;top:728px" width="1366" height="40" viewBox="0 728 1366 40">
<!-- running indicators -->
<g fill="#b4b4b4"><rect x="249" y="766" width="40" height="2"></rect><rect x="298" y="766" width="40" height="2"></rect><rect x="347" y="766" width="40" height="2"></rect><rect x="494" y="766" width="35" height="2"></rect><rect x="531" y="766" width="4" height="2" fill="#8c8c8c"></rect><rect x="543" y="766" width="40" height="2"></rect><rect x="592" y="766" width="40" height="2"></rect><rect x="641" y="766" width="40" height="2"></rect><rect x="690" y="766" width="40" height="2"></rect></g>
<!-- start -->
<g fill="#fff"><path d="M15.600 742.300l7-.95v6.350h-7z"></path><path d="M23.600 741.200l9-1.250v7.750h-9z"></path><path d="M15.600 748.700h7v6.350l-7-.95z"></path><path d="M23.600 748.700h9v7.750l-9-1.250z"></path></g>
<!-- search -->
<circle cx="74.200" cy="746" r="5.300" fill="none" stroke="#fff" stroke-width="1.400"></circle><path d="M70.500 750l-6 5.700" stroke="#fff" stroke-width="1.500"></path>
<!-- store -->
<path d="M111 743.500l21-1.500v17.500l-21-2.500z" fill="#fff"></path><path d="M116 743c0-8 11-8 11.500 0" fill="none" stroke="#fff" stroke-width="1.300"></path><g fill="#121110"><rect x="114.500" y="746.300" width="5.500" height="4"></rect><rect x="121.200" y="745.900" width="6.300" height="4.400"></rect><rect x="114.500" y="751.500" width="5.500" height="4"></rect><rect x="121.200" y="751.500" width="6.300" height="4.500"></rect></g>
<!-- iobit U -->
<circle cx="171" cy="747.800" r="11.500" fill="#1a1f3c" stroke="#1fc67a" stroke-width="1.300"></circle>
<!-- aimp -->
<circle cx="220" cy="747.500" r="9.900" fill="#23201c"></circle><circle cx="220" cy="747.500" r="8.200" fill="#f59a16"></circle><circle cx="220" cy="746.300" r="6.500" fill="#fbb02c" opacity=".6"></circle><path d="M220 741.800l5.600 9.800h-11.200z" fill="#141210"></path><path d="M220 746.200l2.400 3.900h-4.800z" fill="#f2c21c"></path>
<!-- clover -->
<defs><linearGradient id="clg" x1="0" y1="0" x2="0" y2="1"><stop offset="0" stop-color="#b5e063"></stop><stop offset="1" stop-color="#5cab2c"></stop></linearGradient></defs><path d="M268.500 749l-9.700 9" stroke="#3f8f25" stroke-width="1.200"></path><path d="M0 0C-8.500-4.500-7.500-12-3.200-12-1.200-12 0-10.600 0-9.400 0-10.600 1.200-12 3.200-12 7.500-12 8.500-4.500 0 0z" transform="translate(269 748) rotate(-40)" fill="#93d24c"></path><path d="M0 0C-8.500-4.500-7.500-12-3.200-12-1.200-12 0-10.600 0-9.400 0-10.600 1.200-12 3.200-12 7.500-12 8.500-4.500 0 0z" transform="translate(269 748) rotate(38)" fill="#93d24c"></path><path d="M0 0C-8.500-4.500-7.500-12-3.200-12-1.200-12 0-10.600 0-9.400 0-10.600 1.200-12 3.200-12 7.500-12 8.500-4.500 0 0z" transform="translate(269 748) rotate(118)" fill="#7cc540"></path><path d="M0 0C-8.500-4.500-7.500-12-3.200-12-1.200-12 0-10.600 0-9.400 0-10.600 1.200-12 3.200-12 7.500-12 8.500-4.500 0 0z" transform="translate(269 748) rotate(196)" fill="#7cc540"></path><g stroke="#4a9a2a" stroke-width=".7" fill="none"><path d="M269 748l-5-6M269 748l5-5.500M269 748l7 3.500M269 748l-1.500 7"></path></g>
<!-- vlc -->
<path d="M317.800 736.500c1.500 0 2.200 1 2.600 2.300l4.400 14.200h-14l4.400-14.200c.4-1.300 1.100-2.300 2.600-2.300z" fill="#f48b00"></path><path d="M314.700 742h6.200l1 3.500h-8.200zM312.600 749h10.400l1 3.200h-12.400z" fill="#f2f2f2"></path><path d="M308.500 753h18.600l1 5.600h-20.600z" fill="#f48b00"></path>
<!-- firefox dev -->
<defs><linearGradient id="ffg" x1="0" y1="1" x2="1" y2="0"><stop offset="0" stop-color="#1756d8"></stop><stop offset=".55" stop-color="#1d7df0"></stop><stop offset="1" stop-color="#39c6fa"></stop></linearGradient></defs><path d="M370.200 735.800c-2.200 1.600-3.400 3.300-3.600 5-2.600-1.400-5.400-.8-6.800.6-.4-1.200-.3-2.300.1-3.200-3.300 2.200-5 6.200-4.600 10.600.5 6 5.400 10.700 11.400 10.700 6.300 0 11.400-5 11.400-11.300 0-2.900-.9-5-2-6.500.2 1 .1 1.900-.2 2.500-.8-3.400-3.200-5.800-5.700-8.400z" fill="url(#ffg)"></path><circle cx="366.800" cy="748.300" r="4.700" fill="#2a2fa8"></circle><path d="M358.500 745.500c2.500-2.300 6.500-2 9 .8 1.200 1.300 1.200 3 .3 4" stroke="#6fd0ff" stroke-width="1.600" fill="none"></path><circle cx="369.500" cy="746.800" r="1.500" fill="#5a6be0"></circle>
<!-- explorer -->
<path d="M405 739h7.500l1.500 1.500H426.500v15h-21.500z" fill="#f5c84c"></path><rect x="405" y="741.600" width="21.500" height="13.900" fill="#ffe394"></rect><rect x="406" y="739.700" width="4" height="1" fill="#4fc3f7"></rect><path d="M409 757v-8.300h14v8.300h-4v-4.300h-6v4.300z" fill="#29a6f0"></path>
<!-- edge -->
<path transform="translate(-1 -1)" d="M455.500 748c.5-6 5-9.500 10.500-9.500 6 0 9.500 4.500 9.500 10v2h-13.500c.4 3 3 4.500 6 4.500 2.500 0 5-.7 6.800-1.800v4.300c-2 1.100-4.600 1.700-7.500 1.700-6.200 0-10.300-3.800-10.300-9.400 0-4 2.300-7 5.800-8.400-1.500 1.500-2.200 3.300-2.300 4.800h8.500c0-2.800-1.500-4.500-4.300-4.500-3.500 0-6.500 2.400-9.200 6.300z" fill="#0c75d1"></path>
<!-- sublime -->
<rect x="502" y="736" width="24" height="24" rx="2" fill="#4b4b4b"></rect><path d="M507.700 744.300L520.300 740v4.700L513.800 747l6.500 2.300v2.200L507.700 755.800V751l6.300-2.200-6.300-2.300z" fill="#ff9800"></path><path d="M507.700 751l12.600-4.300v4.800l-12.600 4.300z" fill="#ffa726"></path>
<!-- word -->
<rect x="563" y="739.500" width="11" height="17" fill="#fff"></rect><g stroke="#2b579a" stroke-width="1.100"><path d="M565 742.500h8M565 745h8M565 747.500h8M565 750h8M565 752.500h8"></path></g><path d="M551.800 739l13-2.500v23l-13-2.500z" fill="#2b579a"></path>
<!-- xampp -->
<rect x="600" y="736" width="24" height="24" rx="3" fill="#f3701f"></rect><g fill="#fff"><circle cx="607.300" cy="743.500" r="3.800"></circle><circle cx="616.700" cy="743.500" r="3.800"></circle><circle cx="607.300" cy="751.800" r="3.800"></circle><circle cx="616.700" cy="751.800" r="3.800"></circle><rect x="604" y="743.500" width="16" height="8.300"></rect><rect x="607" y="740" width="10" height="15.500"></rect></g><g fill="none" stroke="#f3701f" stroke-width="1.500" stroke-linecap="round"><path d="M609.500 742.200c-3.600-1.700-5.300 3.800-1 5.400-4.300 1.600-2.600 7.100 1 5.400"></path><path d="M614.500 742.200c3.600-1.700 5.300 3.800 1 5.400 4.300 1.600 2.600 7.100-1 5.400"></path><path d="M609.500 742.200c1.600.9 3.400.9 5 0M609.500 753c1.600-.9 3.400-.9 5 0M608.500 747.600h7"></path></g>
<!-- b4j -->
<rect x="649" y="736" width="24" height="24" fill="#fff"></rect>
<!-- blue flame -->
<path d="M703.800 755.200c0-4.700 1.100-7.800 3.100-9.200l1.500 2.100c.6-4.900 2.400-8.800 4.700-11.400 2 2.300 3.400 4.700 4 8.400.9-.4 1.800-.9 2.500-1.600 1.600 2.600 2.600 6.200 2.600 11.700z" fill="#1f78e8"></path><path d="M713.100 736.700c2 2.300 3.400 4.700 4 8.400.9-.4 1.800-.9 2.500-1.600 1.600 2.600 2.600 6.200 2.600 11.700h-3c0-6-2-13-6.100-18.500z" fill="#1763cc"></path><path d="M699 756h17.500M705.500 758.300h11.500" stroke="#0d2c4e" stroke-width="1.500"></path>
<!-- tray -->
<path d="M1148.200 750.800l6-5.800 6 5.800" fill="none" stroke="#fff" stroke-width="1.300"></path>
<g fill="none" stroke="#9a9a9a" stroke-width="1.400"><path d="M1176.500 747a8 8 0 0 1 8-3.800"></path><path d="M1179 749.500a5 5 0 0 1 5.500-2.800"></path><path d="M1181 752a2.500 2.500 0 0 1 3.500-1.700"></path></g><rect x="1183" y="752" width="2.500" height="2.500" fill="#9a9a9a"></rect>
<circle cx="1174.400" cy="751.700" r="4.100" fill="#e81123"></circle><path d="M1172.600 749.900l3.600 3.600M1176.200 749.900l-3.600 3.600" stroke="#fff" stroke-width="1.100"></path>
<path d="M1194 740h16v12.500h-16z" fill="#fff"></path><g stroke="#121110" stroke-width="1"><path d="M1196.500 744h11M1196.500 746.500h11M1196.500 749h5"></path></g><circle cx="1205.800" cy="751.300" r="4" fill="#121110" stroke="#fff" stroke-width="1.200"></circle><path d="M1203.800 751.300h4" stroke="#fff" stroke-width="1.100"></path>
<rect x="1218.700" y="741.700" width="21.600" height="11.600" rx="1" fill="none" stroke="#fff" stroke-width="1.200"></rect><g stroke="#fff" stroke-width="1.200" stroke-dasharray="1.300 1.100"><path d="M1221 744.700h17M1221 747.200h17"></path></g><path d="M1223.500 750.300h12" stroke="#fff" stroke-width="1.200"></path>
<rect x="1360.500" y="728" width="1" height="40" fill="#5a5a5a"></rect>
</svg>
<span class="t" style="color: rgb(31, 198, 122); font-style: italic; font-size: 17.5px; left: 166.3px; top: 738.89px; transform: scaleX(0.7595);">U</span>
<span class="t" style="color: rgb(255, 255, 255); font-weight: bold; font-size: 11px; left: 553.5px; top: 742.99px; transform: scaleX(0.9143);">W</span>
<span class="t" style="color: rgb(230, 106, 180); font-size: 12px; left: 651.5px; top: 742.34px; transform: scaleX(0.9426);">B4J</span>
<span class="t" style="color: rgb(255, 255, 255); font-size: 12px; left: 1252.5px; top: 733.44px; transform: scaleX(0.861);">POR</span>
<span class="t" style="color: rgb(255, 255, 255); font-size: 12px; left: 1257.4px; top: 749.94px; transform: scaleX(0.8397);">US</span>
<span class="t" style="color: rgb(255, 255, 255); font-size: 12px; left: 1308.8px; top: 733.14px; transform: scaleX(0.8325);">12:20</span>
<span class="t" style="color: rgb(255, 255, 255); font-size: 12px; left: 1292.8px; top: 749.44px; transform: scaleX(0.9464);">11/07/2021</span>
</div>
<!-- MODAL -->
<div id="modal">
<div class="a" style="left:523px;top:64px;width:319px;height:600px;background:#1d2838;border-radius:5px 9px 6px 6px"></div>
<div class="a" style="left:802px;top:75px;width:30px;height:30px;background:#ff0000;border-radius:7px"></div>
<svg style="left:811px;top:83px" width="12" height="12" viewBox="0 0 12 12"><path d="M.7.700l10.600 10.600M11.300.700L.7 11.300" stroke="#fff" stroke-width="1.400"></path></svg>
<svg style="left:620px;top:80px" width="120" height="90" viewBox="0 0 1024 768"><path d="M97 668 Q85 668 85 654 C92 590 140 560 245 512 L245 462 C225 432 208 395 205 352 C196 342 195 322 203 310 C196 222 240 160 320 160 C348 158 365 166 382 178 L520 178 L520 668 Z" fill="#fff"></path><path d="M923 668 Q935 668 935 654 C928 590 880 560 775 512 L775 462 C795 432 812 395 815 352 C824 342 825 322 817 310 C824 230 790 185 745 185 C742 172 735 163 700 160 C672 158 655 166 638 178 L500 178 L500 668 Z" fill="#fff"></path><path d="M240 680 C250 615 330 590 400 552 C425 538 435 525 435 505 L435 445 C415 420 400 390 395 362 C380 355 372 335 378 315 C380 305 385 300 388 298 C380 200 420 118 505 112 C520 110 530 114 535 120 C538 128 545 132 555 134 C610 145 640 210 632 298 C636 300 641 306 643 315 C648 335 640 355 626 362 C620 390 606 420 586 445 L586 505 C586 525 596 538 621 552 C691 590 771 615 781 680 Z" fill="#1d2838" stroke="#fff" stroke-width="74" stroke-linejoin="round" paint-order="stroke fill"></path></svg>
<span class="t" style="color: rgb(255, 255, 255); font-weight: bold; -webkit-text-stroke: 0.35px rgb(255, 255, 255); font-size: 21.5px; left: 572.3px; top: 184.4px; transform: scaleX(0.9522);">Welcome to SysGleviH</span>
<span class="t" style="color: rgb(255, 255, 255); font-weight: bold; font-size: 13px; left: 542.8px; top: 214.1px;">We make it easy for everone to maximize</span>
<span class="t" style="color: rgb(255, 255, 255); font-weight: bold; font-size: 13px; left: 542.8px; top: 231.3px;">their ivestiment</span>
<span class="t" style="color: rgb(255, 255, 255); font-size: 15.5px; left: 542.3px; top: 266.78px; transform: scaleX(0.892);">User</span>
<div class="a" style="left:542px;top:289px;width:280px;height:40px;background:#fff;border-radius:3px;box-shadow:inset 0 1px 2px rgba(0,0,0,.25)"></div>
<span class="t" style="color: rgb(51, 51, 51); font-size: 15.5px; left: 552.4px; top: 301.98px; transform: scaleX(0.9101);">laila</span>
<span class="t" style="color: rgb(255, 255, 255); font-size: 15.5px; left: 546.4px; top: 337.98px; transform: scaleX(0.8992);">Password</span>
<div class="a" style="left:542px;top:360px;width:280px;height:40px;background:#fff;border-radius:3px;box-shadow:inset 0 1px 2px rgba(0,0,0,.25)"></div>
<svg style="left:553px;top:377.800px" width="36" height="9" viewBox="0 0 36 9"><g fill="#333"><circle cx="3.700" cy="4.500" r="3.400"></circle><circle cx="12.600" cy="4.500" r="3.400"></circle><circle cx="21.500" cy="4.500" r="3.400"></circle><circle cx="30.400" cy="4.500" r="3.400"></circle></g></svg>
<div class="a" style="left:544px;top:420px;width:280px;height:40px;background:#1b1e37;border-radius:7px"></div>
<span class="t" style="color: rgb(255, 255, 255); font-weight: bold; font-size: 15px; left: 664.5px; top: 432.3px;">Login</span>
<svg style="left:660px;top:532px" width="66" height="66" viewBox="-33 -33 66 66"><defs><radialGradient id="pg" cx="0" cy="0" r="31" gradientUnits="userSpaceOnUse" fx="3" fy="4"><stop offset=".9" stop-color="#fff"></stop><stop offset="1" stop-color="#dcdcdc"></stop></radialGradient></defs><circle cx="0" cy="0" r="31" fill="#ececec"></circle><circle cx="0" cy="0" r="30.300" fill="url(#pg)"></circle><path d="M0 0V-28.800A28.800 28.800 0 0 1 16.900 23.300z" fill="#0096c9"></path></svg>
<span class="t" style="color: rgb(0, 0, 0); font-size: 12.5px; left: 681.7px; top: 601.42px; transform: scaleX(0.9189);">40%</span>
<span class="t" style="color: rgb(255, 255, 255); font-weight: bold; -webkit-text-stroke: 0.2px rgb(255, 255, 255); font-size: 13px; left: 588.5px; top: 630.8px; transform: scaleX(0.8993);">Dont Have account? Create now!</span>
</div>


</body></html>
